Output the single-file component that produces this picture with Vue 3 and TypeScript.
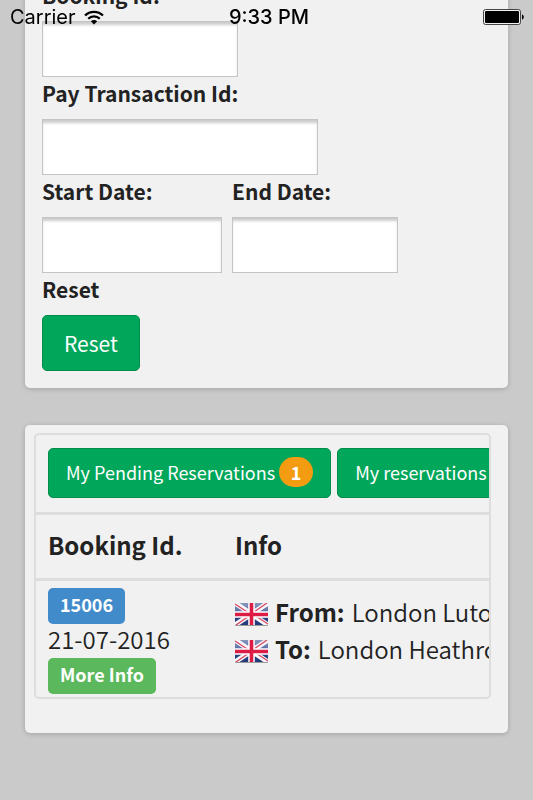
<script setup lang="ts">
import { ref } from 'vue'

interface Stop {
  label: string
  place: string
}

interface Booking {
  id: number
  date: string
  stops: Stop[]
}

const filters = ref({ bookingId: '', transactionId: '', startDate: '', endDate: '' })

const bookings: Booking[] = [
  {
    id: 15006,
    date: '21-07-2016',
    stops: [
      { label: 'From:', place: 'London Luton Airport' },
      { label: 'To:', place: 'London Heathrow Airport' },
    ],
  },
]

function resetFilters(): void {
  filters.value = { bookingId: '', transactionId: '', startDate: '', endDate: '' }
}
</script>

<template>
  <div class="app">
    <header class="status">
      <div class="status-left">
        <span>Carrier</span>
        <svg class="wifi" viewBox="0 0 20 15" aria-hidden="true">
          <path d="M1 5.6a12.6 12.6 0 0 1 18 0" />
          <path d="M4.2 8.8a8.2 8.2 0 0 1 11.6 0" />
          <path class="dot" d="M6.8 11.2a4.6 4.6 0 0 1 6.4 0L10 14.4z" />
        </svg>
      </div>
      <time class="clock">9:33 PM</time>
      <div class="status-right">
        <svg class="battery" viewBox="0 0 41 16" aria-hidden="true">
          <rect class="shell" x="0.5" y="0.5" width="37" height="15" rx="2" />
          <rect x="2" y="2" width="34" height="12" rx="1" />
          <path d="M39 5.5c2.4.5 2.4 4.5 0 5z" />
        </svg>
      </div>
    </header>

    <main class="content">
      <form class="card search" @submit.prevent>
        <div class="field">
          <label for="booking-id">Booking Id:</label>
          <input id="booking-id" v-model="filters.bookingId" class="medium" type="text" />
        </div>
        <div class="field">
          <label for="transaction-id">Pay Transaction Id:</label>
          <input id="transaction-id" v-model="filters.transactionId" class="wide" type="text" />
        </div>
        <div class="dates">
          <div class="field">
            <label for="start-date">Start Date:</label>
            <input id="start-date" v-model="filters.startDate" class="start" type="text" />
          </div>
          <div class="field">
            <label for="end-date">End Date:</label>
            <input id="end-date" v-model="filters.endDate" class="end" type="text" />
          </div>
        </div>
        <div class="field">
          <label for="reset">Reset</label>
          <button id="reset" class="green reset" type="button" @click="resetFilters">Reset</button>
        </div>
      </form>

      <section class="card results">
        <div class="frame">
          <div class="tools">
            <button class="green tab" type="button">
              My Pending Reservations <span class="badge">1</span>
            </button>
            <button class="green tab" type="button">My reservations</button>
          </div>
          <table>
            <thead>
              <tr>
                <th scope="col">Booking Id.</th>
                <th scope="col">Info</th>
              </tr>
            </thead>
            <tbody>
              <tr v-for="booking in bookings" :key="booking.id">
                <td>
                  <div class="summary">
                    <a class="tag blue" href="#booking">{{ booking.id }}</a>
                    <span class="date">{{ booking.date }}</span>
                    <a class="tag lime" href="#info">More Info</a>
                  </div>
                </td>
                <td>
                  <div class="route">
                    <div v-for="stop in booking.stops" :key="stop.label" class="stop">
                      <svg class="flag" viewBox="0 0 33 23" aria-hidden="true">
                        <defs>
                          <linearGradient id="flag-blue" x1="0" y1="0" x2="0" y2="1">
                            <stop offset="0" stop-color="#8797bd" />
                            <stop offset="0.48" stop-color="#5468a0" />
                            <stop offset="0.52" stop-color="#2b4385" />
                            <stop offset="1" stop-color="#223a7b" />
                          </linearGradient>
                          <clipPath id="flag-edge"><rect width="33" height="22" rx="1" /></clipPath>
                        </defs>
                        <rect y="1" width="33" height="22" rx="1" fill="#9a9a9a" />
                        <g clip-path="url(#flag-edge)">
                          <rect width="33" height="22" fill="url(#flag-blue)" />
                          <path d="M0 0L33 22M33 0L0 22" stroke="#f8f8fa" stroke-width="5" />
                          <path d="M0 1L13 9.5M33 21L20 12.5M32 0L19 9M1 22L14 13" stroke="#dc4a66" stroke-width="1.4" />
                          <path d="M16.5 0V22M0 11.5H33" stroke="#fff" stroke-width="6.6" />
                          <path d="M16.5 0V22M0 11.5H33" stroke="#dc1c44" stroke-width="3.6" />
                        </g>
                      </svg>
                      <strong>{{ stop.label }}</strong>
                      <span>{{ stop.place }}</span>
                    </div>
                  </div>
                </td>
              </tr>
            </tbody>
          </table>
        </div>
      </section>
    </main>
  </div>
</template>

<style>
body {
  background: #cacaca;
  overflow: hidden;
}
</style>

<style scoped>
.app,
.app * {
  box-sizing: border-box;
}

.app {
  min-height: 100vh;
  overflow: hidden;
  color: #222;
  background: #cacaca;
  font-family: "Noto Sans CJK SC", "Noto Sans", sans-serif;
}

.status {
  position: fixed;
  z-index: 2;
  top: 0;
  left: 0;
  right: 0;
  height: 34px;
  padding: 0 9px 0 10px;
  display: grid;
  grid-template-columns: 1fr auto 1fr;
  align-items: center;
  color: #000;
  font-family: Inter, "Liberation Sans", sans-serif;
  font-size: 20px;
  line-height: 26px;
}

.status-left {
  display: flex;
  align-items: center;
  gap: 8px;
}

.status-right {
  display: flex;
  justify-content: flex-end;
}

.clock {
  padding-left: 4px;
  font-weight: 500;
}

.wifi {
  width: 20px;
  height: 15px;
  fill: none;
  stroke: #000;
  stroke-width: 2.2;
}

.wifi .dot {
  fill: #000;
  stroke: none;
}

.battery {
  width: 41px;
  height: 16px;
}

.battery .shell {
  fill: #f1f1f1;
  stroke: #444;
}

/* The page is scrolled so that the first label sits under the status bar. */
.content {
  margin-top: -21px;
  padding: 0 25px 66px;
  display: flex;
  flex-direction: column;
  gap: 37px;
}

.card {
  border-radius: 5px;
  background: #f1f1f1;
  box-shadow: 0 1px 5px rgba(0, 0, 0, 0.2);
}

.search {
  padding: 0 17px 17px;
}

.dates {
  display: flex;
  gap: 10px;
}

.field {
  display: flex;
  flex-direction: column;
  align-items: flex-start;
}

label {
  margin-bottom: 10px;
  font-size: 21px;
  font-weight: 700;
  line-height: 32px;
}

input {
  max-width: 100%;
  height: 56px;
  padding: 0 12px;
  border: 1px solid #c4c4c4;
  border-radius: 0;
  outline: none;
  background: #fff;
  box-shadow: inset 0 4px 3px -1px #ccc;
  font: inherit;
  font-size: 20px;
}

.medium {
  width: 196px;
}

.wide {
  width: 276px;
}

.start {
  width: 180px;
}

.end {
  width: 166px;
}

button {
  font-family: inherit;
  cursor: pointer;
}

.green {
  border: 1px solid #008d4c;
  border-radius: 5px;
  color: #fff;
  background: #00a65a;
  white-space: nowrap;
}

.reset {
  height: 56px;
  padding: 0 21px;
  font-size: 21px;
  line-height: 34px;
}

.results {
  padding: 8px 17px 34px 9px;
}

.frame {
  overflow: hidden;
  border: 2px solid #ddd;
  border-radius: 5px;
}

.tools {
  padding: 13px 12px 14px;
  display: flex;
  gap: 6px;
}

.tab {
  flex: none;
  height: 50px;
  padding: 0 17px 2px;
  display: flex;
  align-items: center;
  gap: 4px;
  font-size: 18px;
  line-height: 28px;
}

.badge {
  width: 34px;
  height: 30px;
  border-radius: 15px;
  background: #f39c12;
  font-weight: 700;
  line-height: 30px;
  text-align: center;
}

table {
  width: 100%;
  border-collapse: collapse;
}

th,
td {
  padding: 0 12px;
  border-top: 3px solid #ddd;
  text-align: left;
  vertical-align: top;
  white-space: nowrap;
}

th {
  height: 66px;
  font-size: 24px;
  line-height: 60px;
}

th:first-child {
  min-width: 187px;
}

td {
  padding-top: 7px;
  padding-bottom: 3px;
  font-size: 24px;
  font-weight: 350;
}

strong {
  font-weight: 700;
}

.summary {
  display: flex;
  flex-direction: column;
  align-items: flex-start;
}

.date {
  padding-bottom: 4px;
  line-height: 30px;
}

.tag {
  padding: 0 12px 4px;
  border-radius: 5px;
  color: #fff;
  font-size: 18px;
  font-weight: 700;
  line-height: 32px;
  text-decoration: none;
}

.blue {
  background: #428bca;
}

.lime {
  background: #5cb85c;
}

.route {
  padding-top: 5px;
}

.stop {
  display: flex;
  align-items: center;
  gap: 7px;
  line-height: 37px;
}

.flag {
  flex: none;
  width: 33px;
  height: 23px;
  margin-top: 6px;
}
</style>
